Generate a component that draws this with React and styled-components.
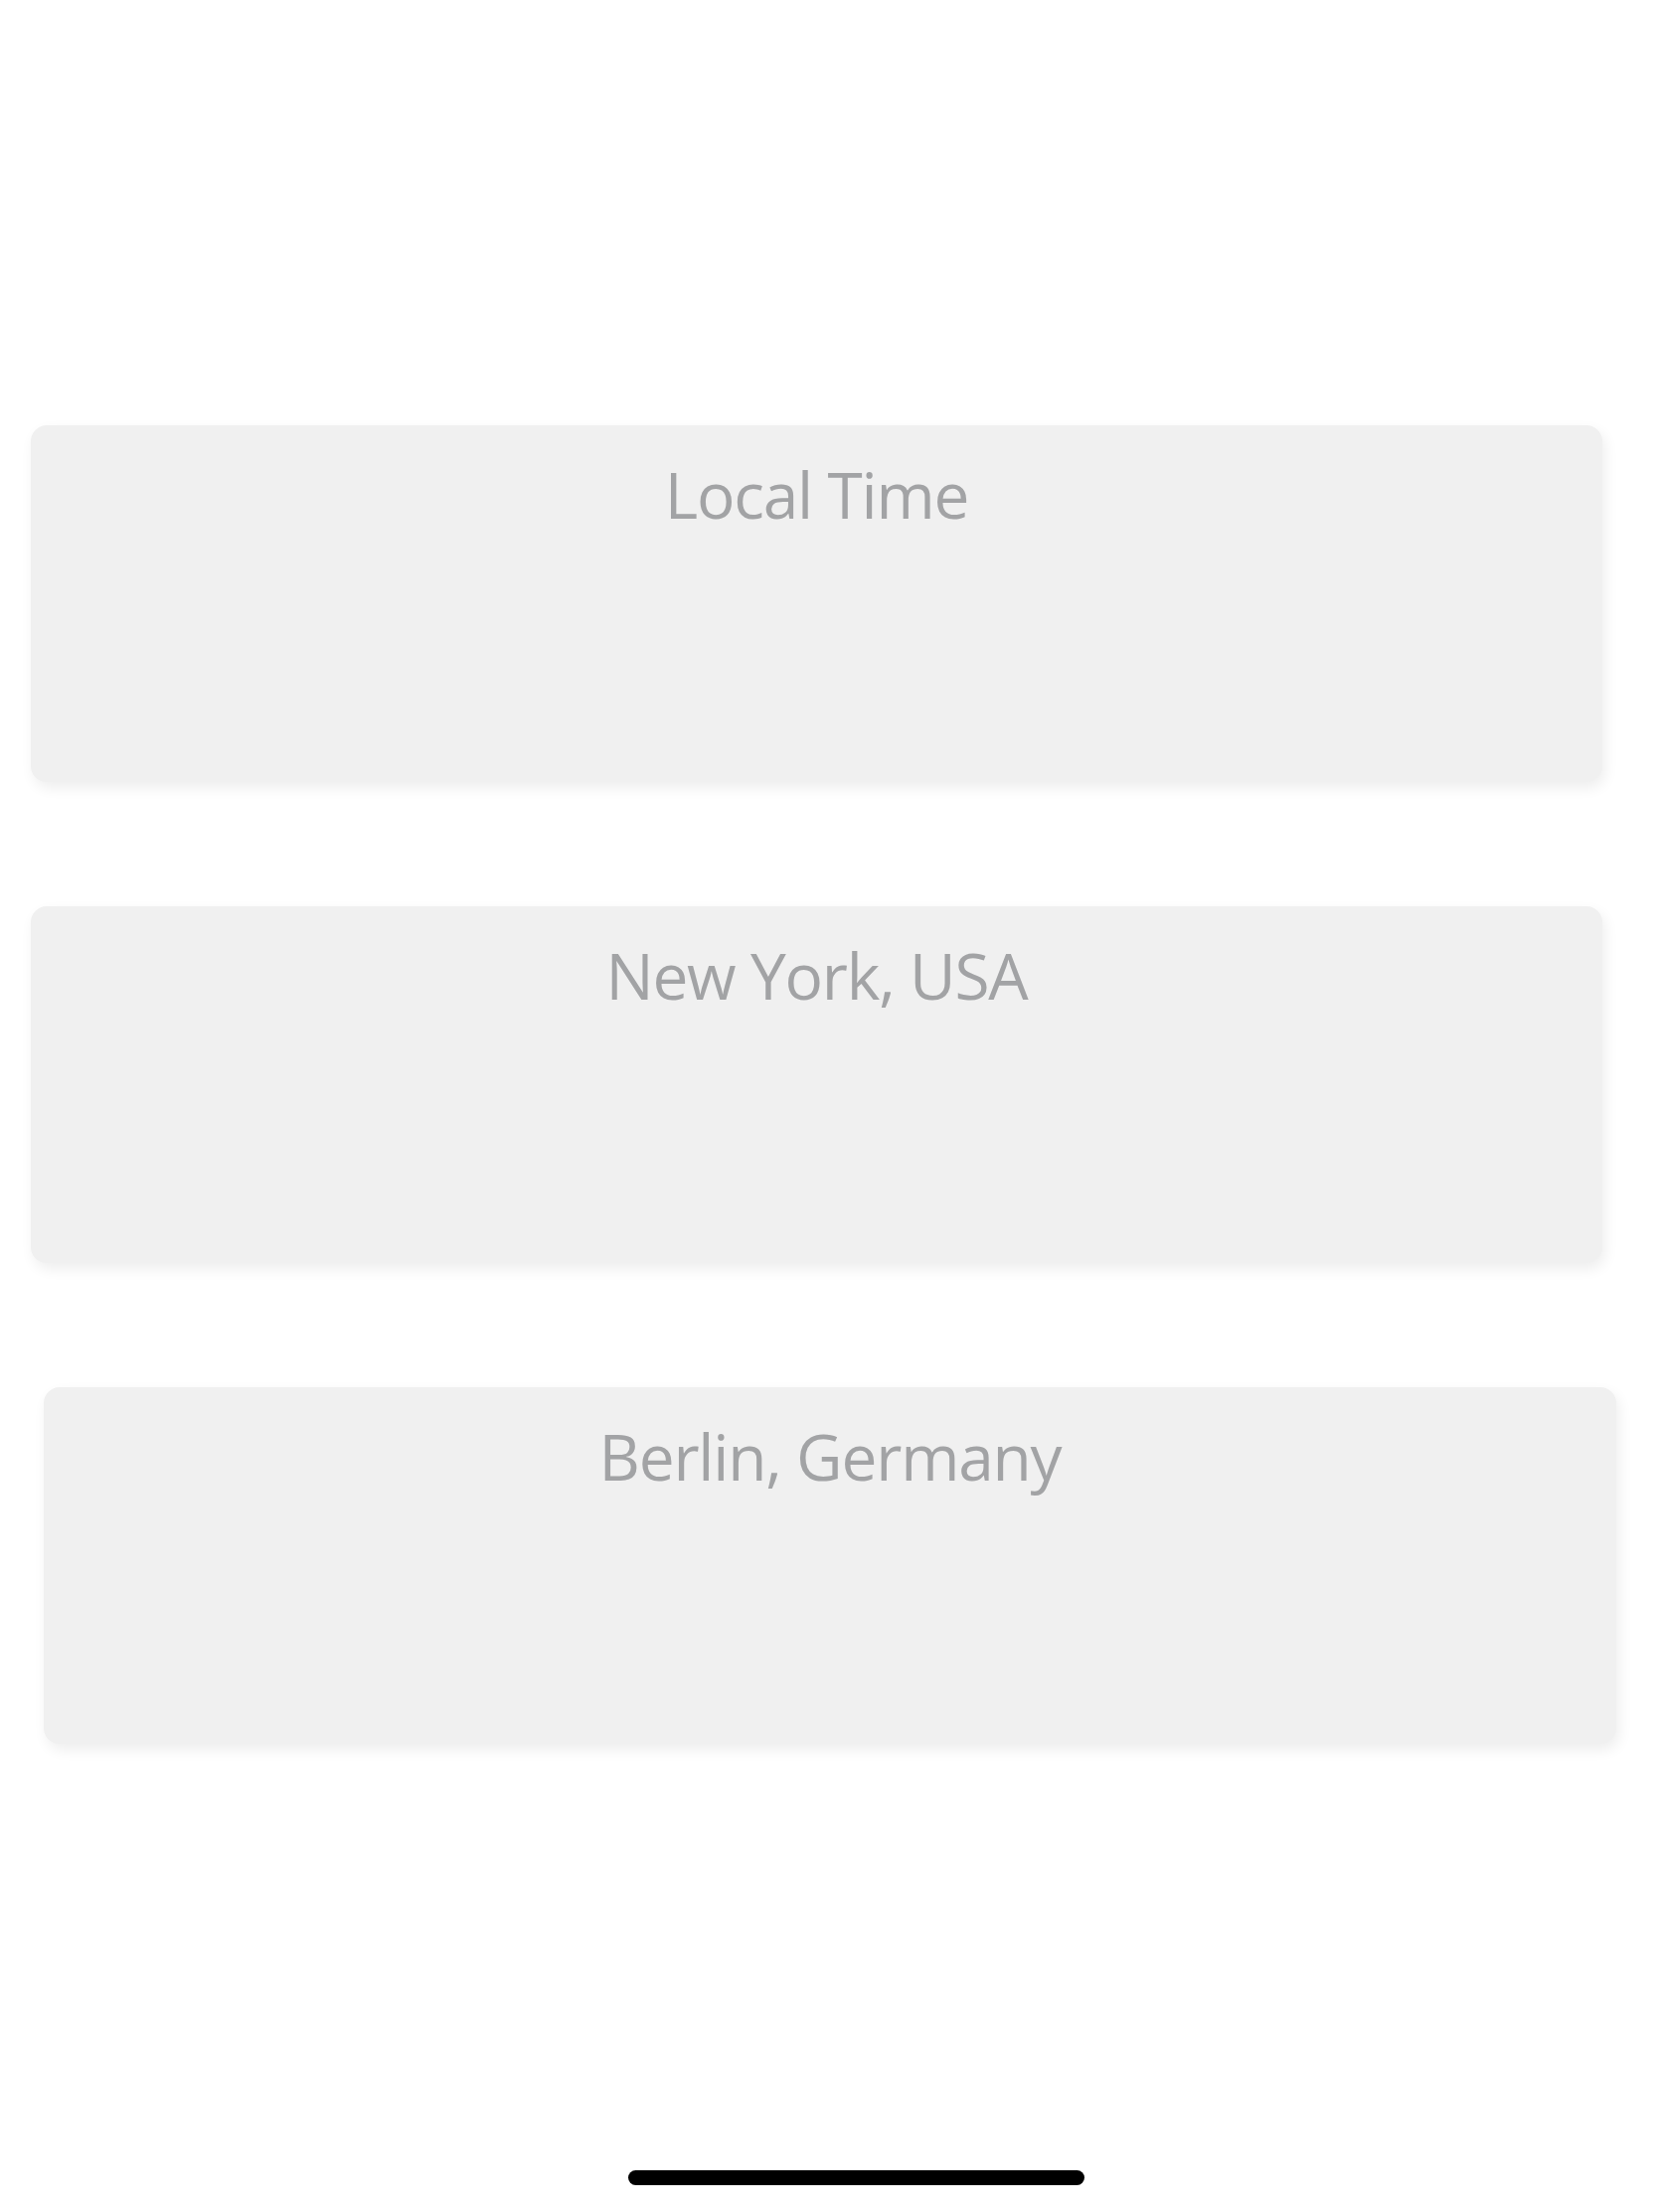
import styled, { createGlobalStyle } from 'styled-components';

const GlobalStyle = createGlobalStyle`
  html, body {
    margin: 0;
    padding: 0;
    background: #fefefe;
  }

  body {
    font-family: "Open Sans", "Noto Sans", sans-serif;
  }
`;

const zones = [
  { label: 'Local Time', left: 31, width: 1581 },
  { label: 'New York, USA', left: 31, width: 1581 },
  { label: 'Berlin, Germany', left: 44, width: 1582 },
];

export default function App() {
  return (
    <>
      <GlobalStyle />
      <Screen>
        <CardList>
          {zones.map((zone) => (
            <ZoneCard key={zone.label} $left={zone.left} $width={zone.width}>
              <ZoneTitle>{zone.label}</ZoneTitle>
            </ZoneCard>
          ))}
        </CardList>
        <HomeIndicator />
      </Screen>
    </>
  );
}

const Screen = styled.div`
  display: flex;
  flex-direction: column;
  min-height: 2226px;
  background: #ffffff;
`;

const CardList = styled.div`
  display: flex;
  flex-direction: column;
  gap: 125px;
  padding-top: 428px;
`;

const ZoneCard = styled.div`
  box-sizing: border-box;
  margin-left: ${(p) => p.$left}px;
  width: ${(p) => p.$width}px;
  height: 359px;
  padding-top: 30px;
  border-radius: 16px;
  background: #f0f0f0;
  box-shadow: 3px 6px 14px rgba(0, 0, 0, 0.07);
`;

const ZoneTitle = styled.div`
  color: #a2a3a5;
  font-size: 64px;
  line-height: 80px;
  text-align: center;
  letter-spacing: -1.2px;
`;

const HomeIndicator = styled.div`
  margin-top: auto;
  margin-bottom: 27px;
  margin-left: 632px;
  width: 459px;
  height: 15px;
  border-radius: 8px;
  background: #000000;
`;
